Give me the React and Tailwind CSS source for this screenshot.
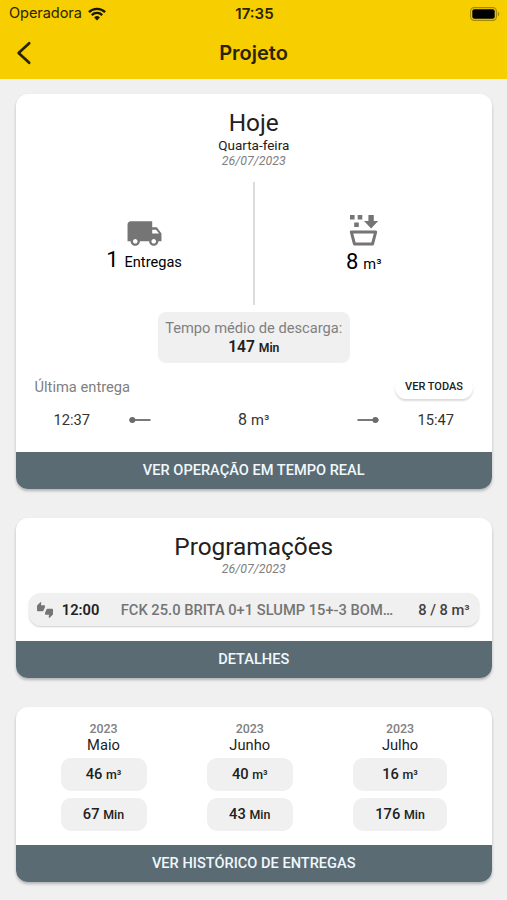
import { MdLocalShipping, MdThumbsUpDown } from 'react-icons/md';

const months = [
  { year: '2023', name: 'Maio', volume: 46, minutes: 67, width: 'w-[86px]' },
  { year: '2023', name: 'Junho', volume: 40, minutes: 43, width: 'w-[86px]' },
  { year: '2023', name: 'Julho', volume: 16, minutes: 176, width: 'w-[94px]' },
];

// White card with the slate action bar at the bottom
const Card = ({ action, className, children }) => (
  <section className={`ml-[15.5px] flex w-[476.5px] flex-col overflow-hidden rounded-xl bg-white shadow-[0_2px_3px_rgba(0,0,0,0.25)] ${className}`}>
    <div className="flex-1">{children}</div>
    <button className="h-[37px] w-full shrink-0 bg-[#5a6b74] pt-px text-[14.6px] font-medium text-[#f0f8fc]">{action}</button>
  </section>
);

const WifiIcon = () => (
  <svg width="18" height="14" viewBox="0 0 18 14" fill="none" stroke="#1a1600" strokeWidth="2.3">
    <path d="M0.9 5.1A11.6 11.6 0 0 1 17.1 5.1" />
    <path d="M3.8 8.1A7.4 7.4 0 0 1 14.2 8.1" />
    <path d="M9 13.4L6.1 10.5A4.1 4.1 0 0 1 11.9 10.5Z" fill="#1a1600" stroke="none" />
  </svg>
);

const BatteryIcon = () => (
  <svg width="31" height="14" viewBox="0 0 31 14">
    <rect x="1.6" y="0.6" width="25.8" height="12.8" rx="3.6" fill="none" stroke="#a48900" strokeWidth="1.1" />
    <rect x="3.3" y="2.3" width="22.4" height="9.4" rx="2" fill="#000" />
    <path d="M28.8 4.7C30.7 5.4 30.7 8.6 28.8 9.3Z" fill="#a48900" />
  </svg>
);

const BucketIcon = () => (
  <svg width="30" height="32" viewBox="0 0 30 32" fill="#757575">
    <path d="M1 1h4.6v4.6H1zM8.7 1h4.6v4.6H8.7zM5.2 8.4h4.6V13H5.2z" />
    <path d="M19.4 1h5.4v6h4.4l-7.1 7.4L15 7h4.4z" />
    <path d="M2.3 17.9h24.4L23.5 30.1H5.5Z" fill="none" stroke="#757575" strokeWidth="3" strokeLinejoin="round" />
  </svg>
);

const Marker = ({ end }) => (
  <svg width="22" height="8" viewBox="0 0 22 8" fill="#6b6b6b">
    <rect x="0.5" y="3.1" width="21" height="1.8" />
    <circle cx={end ? 18.4 : 3.3} cy="4" r="3" />
  </svg>
);

export default function App() {
  return (
    <div className="h-[900px] w-[507px] overflow-hidden bg-[#f0f0f0] font-['Roboto',sans-serif] text-[#212121]">
      {/* Header */}
      <header className="h-[79px] bg-[#f7ce00] font-['Inter',sans-serif]">
        <div className="grid h-[28px] grid-cols-3 items-center pr-[7px] pl-[9px] text-[14.6px] text-[#2a2400]">
          <div className="flex items-center gap-[6px]">
            <span className="tracking-[-0.1px]">Operadora</span>
            <WifiIcon />
          </div>
          <span className="text-center text-[15px] font-semibold">17:35</span>
          <div className="flex justify-end pb-px"><BatteryIcon /></div>
        </div>
        <div className="grid h-[49px] grid-cols-3 items-center pr-4 pl-4 text-[#2a2400]">
          <svg width="16" height="24" viewBox="0 0 16 24" fill="none" stroke="currentColor" strokeWidth="2.7" strokeLinecap="round" strokeLinejoin="round">
            <path d="M13.2 2.2L2.6 12l10.6 9.8" />
          </svg>
          <h1 className="text-center text-[20px] font-semibold">Projeto</h1>
        </div>
      </header>

      {/* Today */}
      <Card action="VER OPERAÇÃO EM TEMPO REAL" className="mt-[15px] h-[395px]">
        <div className="pt-[15px] text-center">
          <h2 className="text-[24.4px] leading-[28px]">Hoje</h2>
          <p className="text-[13.5px] leading-[17px]">Quarta-feira</p>
          <p className="text-[12.4px] leading-[14px] text-[#808080] italic">26/07/2023</p>
        </div>
        <div className="mt-[14px] flex h-[123px]">
          <div className="flex w-[237px] flex-col items-center pt-[33px] pl-[20px]">
            <MdLocalShipping size={37} className="text-[#757575]" />
            <p className="-mt-[3px] leading-[22px] text-black"><span className="text-[22px]">1</span><span className="ml-[6px] text-[14.6px]">Entregas</span></p>
          </div>
          <div className="w-[2px] bg-[#dcdcdc]" />
          <div className="flex flex-1 flex-col items-center pt-[32px] pr-[19px]">
            <BucketIcon />
            <p className="mt-[4px] leading-[24px] text-black"><span className="text-[22px]">8</span><span className="ml-[5px] text-[14.6px]">m³</span></p>
          </div>
        </div>
        <div className="mx-auto mt-[7px] h-[51px] w-[192px] rounded-lg bg-[#f0f0f0] pt-[7px] text-center">
          <p className="text-[14.7px] leading-[19px] text-[#808080]">Tempo médio de descarga:</p>
          <p className="text-[15.6px] leading-[19px] font-semibold">147 <span className="text-[12.2px]">Min</span></p>
        </div>
        <div className="mt-[12px] flex h-[24px] items-center justify-between pr-[19px] pl-[19px]">
          <span className="text-[14.7px] text-[#808080]">Última entrega</span>
          <button className="h-[23px] w-[78px] rounded-full bg-white text-[11px] font-medium shadow-[0_2px_2px_rgba(0,0,0,0.14)]">VER TODAS</button>
        </div>
        <div className="mt-[9px] flex h-[24px] items-center justify-between pr-[38px] pl-[38px] text-[14.7px] text-[#333]">
          <span>12:37</span>
          <Marker />
          <span className="mx-[49px] text-[16px]">8 <span className="text-[14.7px]">m³</span></span>
          <Marker end />
          <span>15:47</span>
        </div>
      </Card>

      {/* Schedules */}
      <Card action="DETALHES" className="mt-[29px] h-[159.5px]">
        <div className="pt-[15px] text-center">
          <h2 className="text-[24.4px] leading-[28px]">Programações</h2>
          <p className="text-[12.4px] leading-[16px] text-[#808080] italic">26/07/2023</p>
        </div>
        <div className="mx-auto mt-[16px] flex h-[33px] w-[450px] items-center rounded-xl bg-[#f0f0f0] pt-px pr-[9px] pl-[8px] text-[14.7px] font-medium shadow-[0_1px_2px_rgba(0,0,0,0.2)]">
          <MdThumbsUpDown size={16} className="text-[#757575]" />
          <span className="ml-[9px] w-[59px] font-semibold">12:00</span>
          <span className="text-[#757575]">FCK 25.0 BRITA 0+1 SLUMP 15+-3 BOM…</span>
          <span className="ml-auto text-[#424242]">8 / 8 m³</span>
        </div>
      </Card>

      {/* Deliveries history */}
      <Card action="VER HISTÓRICO DE ENTREGAS" className="mt-[29.5px] h-[175px]">
        <div className="flex justify-between pt-[14px] pr-[45px] pl-[45px]">
          {months.map((m) => (
            <div key={m.name} className={`flex flex-col items-center ${m.width}`}>
              <p className="text-[12.4px] leading-[15px] font-medium text-[#808080]">{m.year}</p>
              <p className="text-[14.7px] leading-[18px]">{m.name}</p>
              <p className="mt-[4px] h-[33px] w-full rounded-[10px] bg-[#f0f0f0] text-center text-[14.7px] leading-[33px] font-medium">{m.volume} <span className="text-[12.4px]">m³</span></p>
              <p className="mt-[7px] h-[33px] w-full rounded-[10px] bg-[#f0f0f0] text-center text-[14.7px] leading-[33px] font-medium">{m.minutes} <span className="text-[12.4px]">Min</span></p>
            </div>
          ))}
        </div>
      </Card>
    </div>
  );
}
